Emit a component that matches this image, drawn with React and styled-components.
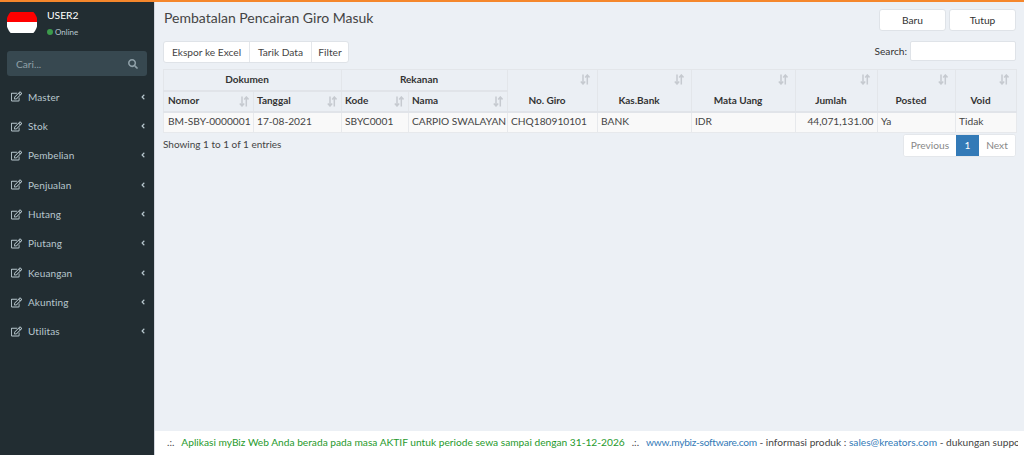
import React from "react";
import styled, { createGlobalStyle } from "styled-components";
import { FaRegEdit, FaAngleLeft, FaSearch } from "react-icons/fa";

const Global = createGlobalStyle`
  html, body { margin: 0; padding: 0; height: 100%; background: #ecf0f5; }
  #root { height: 455px; }
  * { box-sizing: border-box; }
  body { font-family: "Lato", "Open Sans", sans-serif; color: #333; font-size: 10.2px; }
`;

const Shell = styled.div`
  height: 455px; width: 1024px; overflow: hidden;
  border-top: 2px solid #f5872c;
  display: flex;
`;
const Sidebar = styled.aside`
  width: 154px; flex: none; background: #222d32; padding: 10px 7px 0;
`;
const UserPanel = styled.div`
  display: flex; gap: 10px; height: 39px;
`;
const Flag = styled.div`
  width: 30px; height: 21px; flex: none;
  clip-path: circle(15.5px at 50% 50%);
  background: linear-gradient(#f00 0 50%, #fff 50% 100%);
`;
const UserInfo = styled.div`
  display: flex; flex-direction: column; gap: 4px; margin-top: -3px;
`;
const UserName = styled.div`
  color: #fff; font-size: 10.3px; line-height: 13px;
`;
const Status = styled.div`
  color: #b8c7ce; font-size: 8px; line-height: 12px; display: flex; align-items: center; gap: 2px;
`;
const Dot = styled.span`
  width: 6px; height: 6px; border-radius: 50%; background: #3c9a4b;
`;
const SearchBox = styled.div`
  height: 25px; background: #374850; border-radius: 3px; display: flex;
  align-items: center; justify-content: space-between; padding: 0 9px 0 9px;
  color: #8fa0a8; font-size: 10.2px;
`;
const Nav = styled.nav`
  margin-top: 6px; margin-left: -3px; margin-right: -1px;
`;
const NavItem = styled.div`
  height: 29.35px; display: flex; align-items: center; padding: 0 1px 0 7px;
  color: #b8c7ce; font-size: 10px; letter-spacing: .1px;
`;
const NavLabel = styled.span`
  flex: 1; margin-left: 6px;
`;
const Main = styled.main`
  flex: 1; min-width: 0; display: flex; flex-direction: column; border-left: 1px solid #d2d6de;
`;
const Content = styled.div`
  flex: 1; padding: 7px 8px 0 8px;
`;
const TitleRow = styled.div`
  display: flex; justify-content: space-between; align-items: flex-start; height: 32px;
`;
const Title = styled.h1`
  margin: 0 0 0 1px; font-size: 14px; font-weight: 400; line-height: 18px; color: #444;
`;
const Actions = styled.div`
  display: flex; gap: 3px;
`;
const Btn = styled.button`
  width: 67px; height: 22px; background: #fff; border: 1px solid #dfe3e8; border-radius: 3px;
  font: inherit; font-size: 10.2px; color: #333; padding: 0;
`;
const ToolRow = styled.div`
  display: flex; justify-content: space-between; align-items: flex-start; height: 28px;
`;
const BtnGroup = styled.div`
  display: flex; background: #fff; border: 1px solid #dfe3e8; border-radius: 3px; height: 22px;
`;
const GroupBtn = styled.div`
  width: ${p => p.$w}px; text-align: center; line-height: 20px; font-size: 10.2px; color: #444;
  border-left: ${p => p.$first ? "none" : "1px solid #e4e7eb"};
`;
const SearchWrap = styled.label`
  display: flex; align-items: center; gap: 3px; font-size: 10.2px; color: #333;
`;
const SearchField = styled.div`
  width: 106px; height: 20px; background: #fff; border: 1px solid #dfe3e8; border-radius: 2px;
`;
const Table = styled.table`
  width: 853px; table-layout: fixed; border-collapse: collapse; font-size: 10px;
  border: 1px solid #e3e6ea;
`;
const Th = styled.th`
  position: relative; font-weight: 700; color: #333; background: #ebeff4;
  border: 1px solid #e3e6ea; border-bottom: 2px solid #e1e4e9;
  height: 21px;
  text-align: ${p => p.$left ? "left" : "center"};
  vertical-align: ${p => p.$bottom ? "bottom" : "middle"};
  padding: 0 ${p => p.$left ? 4 : 15}px ${p => p.$bottom ? 5 : 2}px ${p => p.$left ? 3 : 4}px;
  &:first-child { padding-left: ${p => p.$left ? 4 : 4}px; }
`;
const SortIcon = styled.svg`
  position: absolute; right: ${p => p.$right}px; top: ${p => p.$top}px;
`;
const Td = styled.td`
  background: #f9f9f9; border: 1px solid #e7e9ec; padding: 0 3.5px 2px 3px; height: 21px; color: #444;
  white-space: nowrap; overflow: hidden; font-size: 10.2px;
  text-align: ${p => p.$right ? "right" : "left"};
  &:first-child { padding-left: 4px; }
`;
const FootRow = styled.div`
  display: flex; justify-content: space-between; align-items: flex-start; margin-top: 1px;
`;
const Info = styled.div`
  padding-top: 4px; font-size: 10px; color: #444;
`;
const Pager = styled.div`
  display: flex; height: 23px; background: #fff; border: 1px solid #e4e7eb; border-radius: 3px; overflow: hidden;
`;
const Page = styled.div`
  width: ${p => p.$w}px; text-align: center; line-height: 21px; font-size: 10.2px;
  background: ${p => p.$active ? "#337ab7" : "#fff"};
  color: ${p => p.$active ? "#fff" : "#888"};
`;
const Footer = styled.footer`
  height: 24px; background: #fff; white-space: nowrap; overflow: hidden;
  padding: 1px 6px 0 12px; line-height: 20px; font-size: 10.2px; color: #444;
`;
const Green = styled.span`
  color: #1f9a2c; margin: 0 7px;
`;
const Blue = styled.span`
  color: #337ab7; letter-spacing: ${p => p.$tight ? "-.27px" : "0"}; margin-left: ${p => p.$gap || 0}px;
`;
const Clip = styled.div`
  overflow: hidden; width: 100%;
`;

const items = ["Master", "Stok", "Pembelian", "Penjualan", "Hutang", "Piutang", "Keuangan", "Akunting", "Utilitas"];
const cols = [90, 88, 67, 99, 90, 94, 104, 82, 78, 61];

const Sort = ({ top, right }) => (
  <SortIcon $top={top} $right={right} width="10" height="11" viewBox="0 0 10 11" fill="none" stroke="#c6cad0" strokeWidth="1.5">
    <path d="M3 0.5V10M0.8 7.6L3 10L5.2 7.6" />
    <path d="M7.3 10.5V1M5.2 3.4L7.3 1L9.5 3.4" />
  </SortIcon>
);

export default function App() {
  return (
    <>
      <Global />
      <Shell>
        <Sidebar>
          <UserPanel>
            <Flag />
            <UserInfo>
              <UserName>USER2</UserName>
              <Status><Dot />Online</Status>
            </UserInfo>
          </UserPanel>
          <SearchBox>Cari...<FaSearch size={10} /></SearchBox>
          <Nav>
            {items.map(i => (
              <NavItem key={i}>
                <FaRegEdit size={11} />
                <NavLabel>{i}</NavLabel>
                <FaAngleLeft size={8} />
              </NavItem>
            ))}
          </Nav>
        </Sidebar>
        <Main>
          <Content>
            <TitleRow>
              <Title>Pembatalan Pencairan Giro Masuk</Title>
              <Actions><Btn>Baru</Btn><Btn>Tutup</Btn></Actions>
            </TitleRow>
            <ToolRow>
              <BtnGroup>
                <GroupBtn $first $w={85}>Ekspor ke Excel</GroupBtn>
                <GroupBtn $w={62}>Tarik Data</GroupBtn>
                <GroupBtn $w={37}>Filter</GroupBtn>
              </BtnGroup>
              <SearchWrap>Search:<SearchField /></SearchWrap>
            </ToolRow>
            <Table>
              <colgroup>{cols.map((c, i) => <col key={i} style={{ width: c }} />)}</colgroup>
              <thead>
                <tr>
                  <Th colSpan={2}>Dokumen</Th>
                  <Th colSpan={2}>Rekanan</Th>
                  {["No. Giro", "Kas.Bank", "Mata Uang", "Jumlah", "Posted", "Void"].map(h => (
                    <Th key={h} rowSpan={2} $bottom>{h}<Sort top={4} right={7} /></Th>
                  ))}
                </tr>
                <tr>
                  {["Nomor", "Tanggal", "Kode", "Nama"].map(h => (
                    <Th key={h} $left>{h}<Sort top={4} right={4} /></Th>
                  ))}
                </tr>
              </thead>
              <tbody>
                <tr>
                  <Td>BM-SBY-0000001</Td>
                  <Td>17-08-2021</Td>
                  <Td>SBYC0001</Td>
                  <Td>CARPIO SWALAYAN</Td>
                  <Td>CHQ180910101</Td>
                  <Td>BANK</Td>
                  <Td>IDR</Td>
                  <Td $right>44,071,131.00</Td>
                  <Td>Ya</Td>
                  <Td>Tidak</Td>
                </tr>
              </tbody>
            </Table>
            <FootRow>
              <Info>Showing 1 to 1 of 1 entries</Info>
              <Pager>
                <Page $w={52}>Previous</Page>
                <Page $w={23} $active>1</Page>
                <Page $w={36}>Next</Page>
              </Pager>
            </FootRow>
          </Content>
          <Footer>
            <Clip>
              .:.<Green>Aplikasi myBiz Web Anda berada pada masa AKTIF untuk periode sewa sampai dengan 31-12-2026</Green>.:.<Blue $tight $gap={7}>www.mybiz-software.com</Blue> - informasi produk : <Blue>sales@kreators.com</Blue> - dukungan support : support@kreators.com
            </Clip>
          </Footer>
        </Main>
      </Shell>
    </>
  );
}
